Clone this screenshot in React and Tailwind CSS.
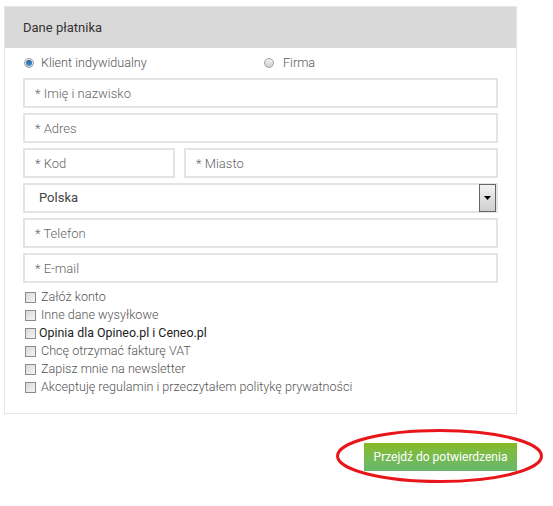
import React from "react";

const inputCls =
  "h-[30px] w-full border-2 border-[#e4e4e4] bg-white px-[10px] text-[13px] font-light text-[#555] placeholder:text-[#666] outline-none";

function Field({ placeholder, className = "" }) {
  return (
    <div className={className}>
      <input type="text" placeholder={placeholder} className={inputCls} />
    </div>
  );
}

function Radio({ checked }) {
  return (
    <span className="relative inline-block h-[10px] w-[10px] rounded-full border border-[#a0a0a0] bg-gradient-to-b from-[#f4f4f4] to-[#cfcfcf]">
      {checked ? (
        <span className="absolute left-[1px] top-[1px] h-[6px] w-[6px] rounded-full bg-gradient-to-b from-[#1f5fa0] to-[#4a9ad8]" />
      ) : null}
    </span>
  );
}

function Check({ label, strong = false }) {
  return (
    <label className="flex h-[18px] items-center">
      <span className="inline-block h-[11px] w-[11px] border border-[#8c8c8c] bg-gradient-to-br from-[#d8d8d8] to-[#f6f6f6]" />
      <span
        className={
          strong
            ? "ml-[3px] text-[12.4px] text-[#222]"
            : "ml-[5px] text-[12.6px] font-light text-[#555]"
        }
      >
        {label}
      </span>
    </label>
  );
}

export default function App() {
  return (
    <div className="h-[506px] w-[553px] bg-white font-['Roboto',sans-serif]">
      <div className="pl-[4px] pt-[6px]">
        <div className="w-[513px] border border-[#e6e6e6]">
          <div className="flex h-[41px] items-center bg-[#d9d9d9] px-[18px] text-[13px] text-[#333]">
            Dane płatnika
          </div>
          <div className="px-[18px] pb-[17px] pt-[7px]">
            <div className="flex h-[16px] items-center text-[12.6px] font-light text-[#555]">
              <div className="flex w-[241px] items-center pl-[1px]">
                <Radio checked />
                <span className="ml-[7px]">Klient indywidualny</span>
              </div>
              <div className="flex items-center">
                <Radio />
                <span className="ml-[9px]">Firma</span>
              </div>
            </div>
            <div className="mt-[7px] flex w-[475px] flex-col gap-[5px]">
              <Field placeholder="* Imię i nazwisko" />
              <Field placeholder="* Adres" />
              <div className="flex gap-[9px]">
                <Field placeholder="* Kod" className="w-[152px]" />
                <Field placeholder="* Miasto" className="flex-1" />
              </div>
              <div className="flex h-[30px] items-center border-2 border-[#e4e4e4] pl-[14px] pr-0 text-[13px] text-[#444]">
                <span className="flex-1">Polska</span>
                <span className="flex h-[28px] w-[17px] items-center justify-center border border-[#666] bg-gradient-to-b from-[#f2f2f2] to-[#cfcfcf]">
                  <svg width="7" height="4" viewBox="0 0 7 4">
                    <path d="M0 0h7L3.5 4z" fill="#000" />
                  </svg>
                </span>
              </div>
              <Field placeholder="* Telefon" />
              <Field placeholder="* E-mail" />
            </div>
            <div className="mt-[5px] flex flex-col pl-[2px]">
              <Check label="Załóż konto" />
              <Check label="Inne dane wysyłkowe" />
              <Check label="Opinia dla Opineo.pl i Ceneo.pl" strong />
              <Check label="Chcę otrzymać fakturę VAT" />
              <Check label="Zapisz mnie na newsletter" />
              <Check label="Akceptuję regulamin i przeczytałem politykę prywatności" />
            </div>
          </div>
        </div>
      </div>
      <div className="flex justify-end pr-[36px] pt-[29px]">
        <div className="relative">
          <button className="h-[28px] w-[153px] bg-gradient-to-b from-[#86bb1f] to-[#66b86c] text-center text-[12px] text-white">
            Przejdź do potwierdzenia
          </button>
          <svg
            className="pointer-events-none absolute left-[-30px] top-[-16px]"
            width="212"
            height="58"
            viewBox="0 0 212 58"
          >
            <ellipse cx="105.5" cy="29" rx="102" ry="25.5" fill="none" stroke="#e8151b" strokeWidth="3" />
          </svg>
        </div>
      </div>
    </div>
  );
}
